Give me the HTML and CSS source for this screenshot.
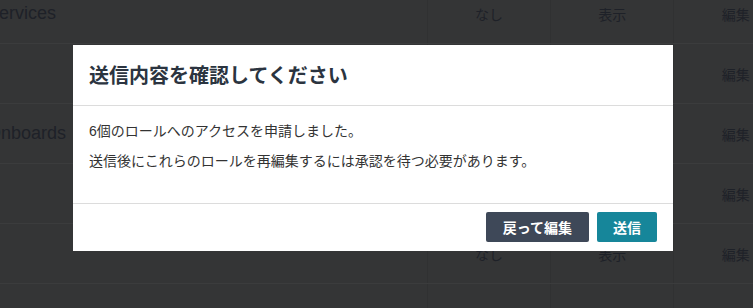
FILE: index.html
```html
<!DOCTYPE html>
<html lang="ja">
<head>
    <meta charset="UTF-8">
    <meta name="viewport" content="width=device-width, initial-scale=1.0">
    <title>ロール申請</title>
    <link rel="stylesheet" href="styles.css">
</head>
<body>
    <!-- Role table behind the dialog -->
    <table class="role-table">
        <colgroup>
            <col class="col-name">
            <col class="col-perm">
            <col class="col-perm">
            <col class="col-perm">
        </colgroup>
        <tr>
            <td class="name">Services</td>
            <td>なし</td>
            <td>表示</td>
            <td>編集</td>
        </tr>
        <tr>
            <td class="name"></td>
            <td>なし</td>
            <td>表示</td>
            <td>編集</td>
        </tr>
        <tr>
            <td class="name">Onboards</td>
            <td>なし</td>
            <td>表示</td>
            <td>編集</td>
        </tr>
        <tr>
            <td class="name"></td>
            <td>なし</td>
            <td>表示</td>
            <td>編集</td>
        </tr>
        <tr>
            <td class="name"></td>
            <td>なし</td>
            <td>表示</td>
            <td>編集</td>
        </tr>
        <tr>
            <td class="name"></td>
            <td>なし</td>
            <td>表示</td>
            <td>編集</td>
        </tr>
    </table>

    <!-- Confirm dialog -->
    <div class="modal">
        <div class="modal-header">
            <h2>送信内容を確認してください</h2>
        </div>
        <div class="modal-body">
            <p>6個のロールへのアクセスを申請しました。</p>
            <p>送信後にこれらのロールを再編集するには承認を待つ必要があります。</p>
        </div>
        <div class="modal-footer">
            <button class="btn btn-back">戻って編集</button>
            <button class="btn btn-submit">送信</button>
        </div>
    </div>
</body>
</html>
```

FILE: styles.css
```css
html, body {
    margin: 0;
    height: 100%;
    overflow: hidden;
}
body {
    font-family: "Liberation Sans", "Noto Sans CJK JP", sans-serif;
    background-color: #343536;
}
.role-table {
    border-collapse: collapse;
    table-layout: fixed;
    margin-top: -16px;
    width: 797px;
    color: #1e2128;
    font-size: 14px;
}
.col-name {
    width: 427px;
}
.col-perm {
    width: 123px;
}
.role-table td {
    height: 59px;
    padding: 0;
    text-align: center;
    white-space: nowrap;
    overflow: hidden;
    border-bottom: 1px solid #3b3c3d;
    border-left: 1px solid #303132;
}
.role-table td.name {
    text-align: left;
    font-size: 18px;
    text-indent: -13px;
    border-left: none;
}
.modal {
    position: fixed;
    top: 45px;
    left: 73px;
    width: 600px;
    background-color: #ffffff;
}
.modal-header {
    padding: 16px;
    border-bottom: 1px solid #dcdcdc;
}
.modal-header h2 {
    margin: 0;
    font-family: "Noto Sans CJK JP", sans-serif;
    font-size: 20px;
    line-height: 28px;
    font-weight: bold;
    color: #2b3440;
}
.modal-body {
    padding: 15px 16px 16px;
    font-size: 14px;
    color: #333;
}
.modal-body p {
    margin: 0 0 9px;
    line-height: 21px;
}
.modal-body p:last-child {
    margin-bottom: 15px;
}
.modal-footer {
    display: flex;
    justify-content: flex-end;
    gap: 8px;
    padding: 8px 16px 9px;
    border-top: 1px solid #dcdcdc;
}
.btn {
    height: 30px;
    padding: 0 16px;
    border: none;
    border-radius: 2px;
    color: #ffffff;
    font-family: "Noto Sans CJK JP", sans-serif;
    font-size: 14px;
    font-weight: bold;
    cursor: pointer;
}
.btn-back {
    padding: 0 17px;
    background-color: #3e4858;
}
.btn-submit {
    background-color: #16869a;
}
```
